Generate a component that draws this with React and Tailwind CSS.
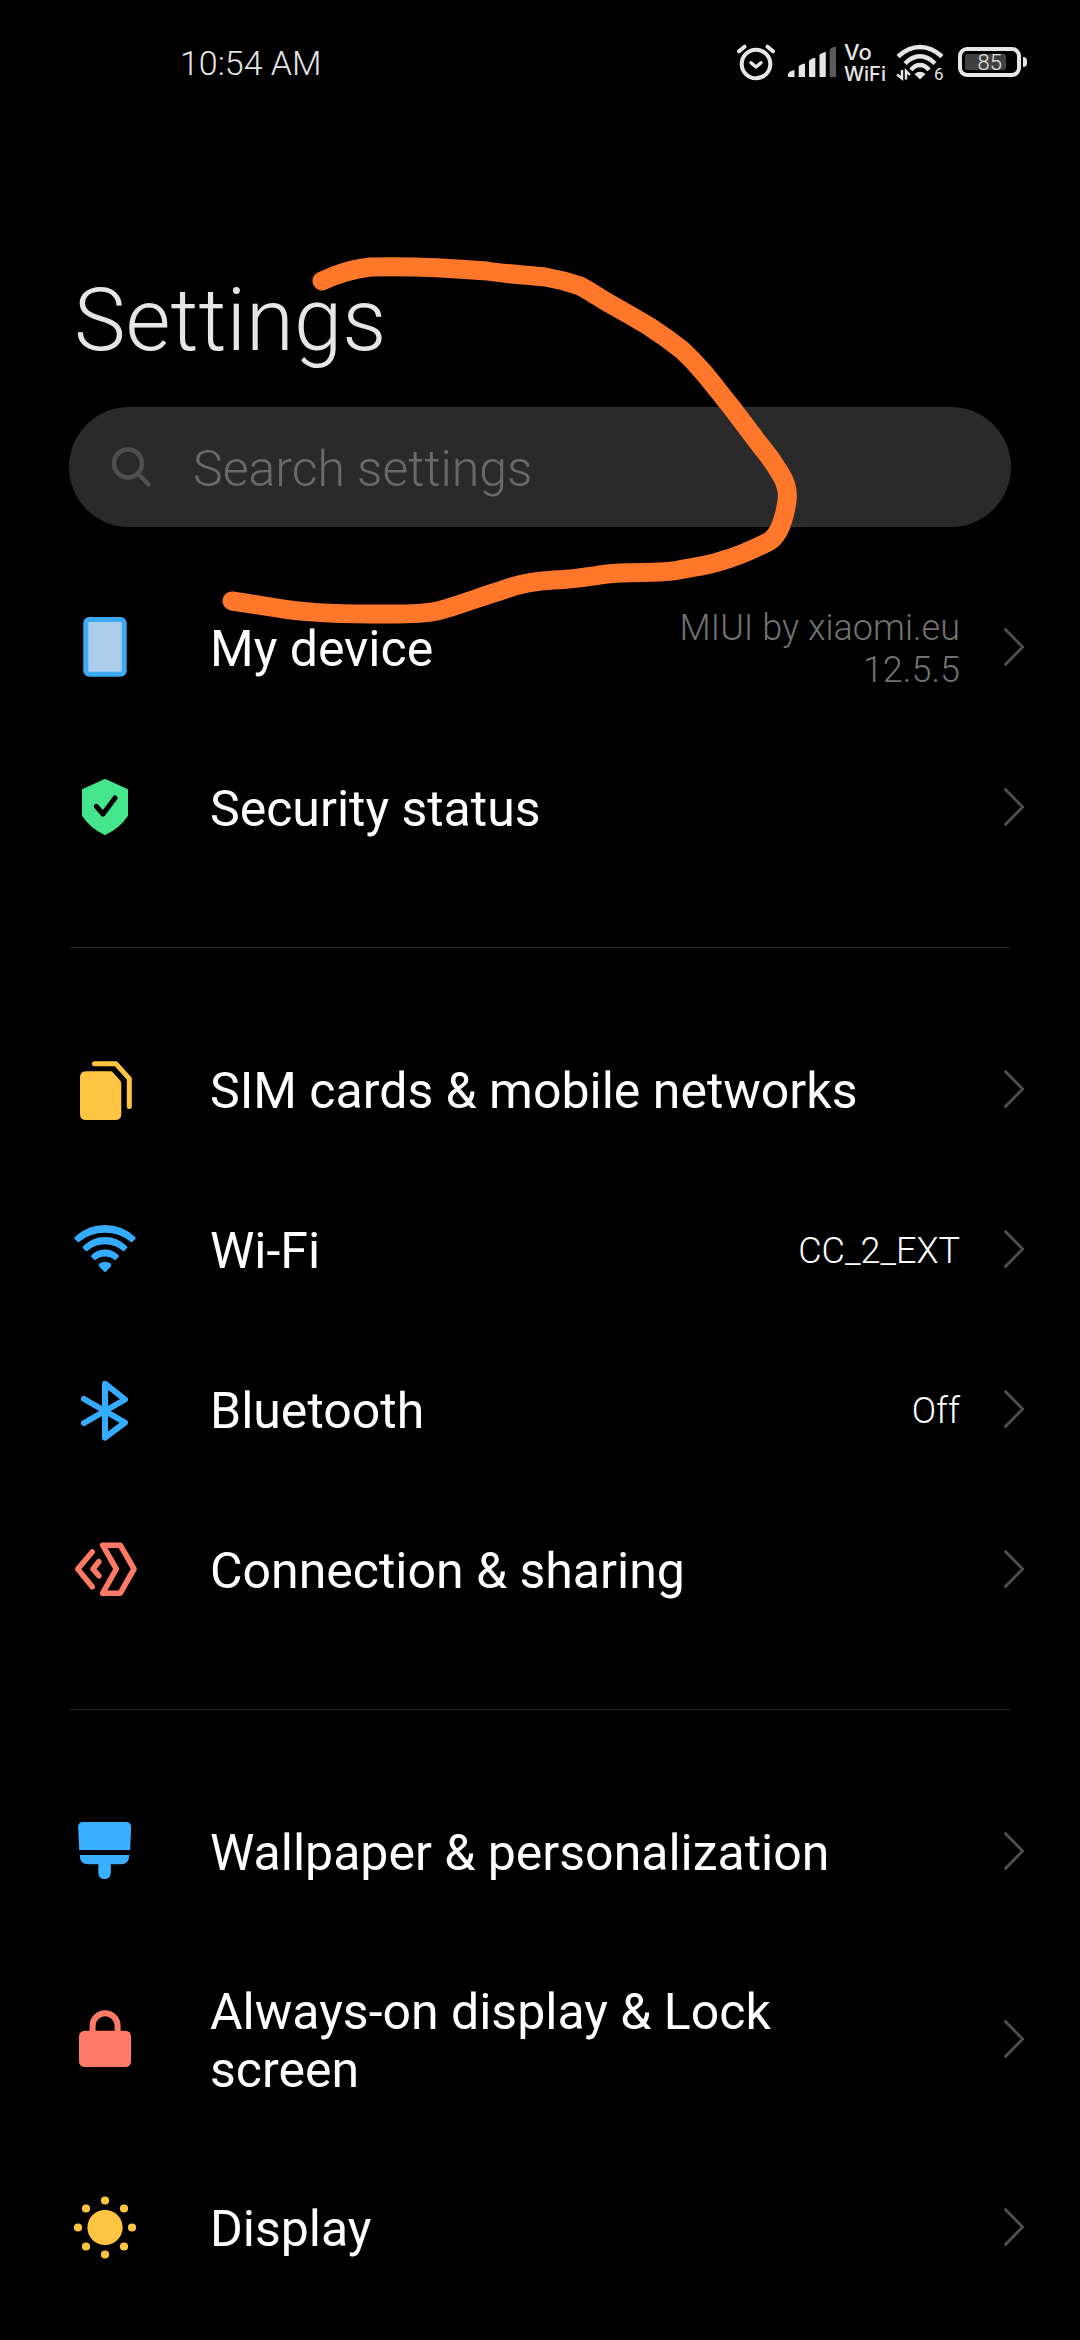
import React, { useState } from 'react';

const DeviceIcon = () => (
    <svg viewBox="0 0 72 72" className="w-[72px] h-[72px]">
        <rect x="16.8" y="8.5" width="38.4" height="54.7" rx="3.5" fill="#adcdec" stroke="#3eaaf2" strokeWidth="5" />
    </svg>
);

const ShieldIcon = () => (
    <svg viewBox="0 0 72 72" className="w-[72px] h-[72px]">
        <path d="M36 9L58 19V44.5C53 52 45 59 36 63C27 59 19 52 14 44.5V19Z" fill="#44e58c" stroke="#44e58c" strokeWidth="2" strokeLinejoin="round" />
        <path d="M27.3 35.3L34 43L46 27" fill="none" stroke="#000" strokeWidth="5" strokeLinecap="round" strokeLinejoin="round" />
    </svg>
);

const SimIcon = () => (
    <svg viewBox="0 0 72 72" className="w-[72px] h-[72px]">
        <path d="M17 18.3H41.5Q43 18.3 44 19.4L51.2 27.4Q52.3 28.6 52.3 30V61Q52.3 67 46.3 67H17Q11 67 11 61V24.3Q11 18.3 17 18.3Z" fill="#ffc542" />
        <path d="M25.5 10.8H47L60.3 25.7V53.5" fill="none" stroke="#ffc542" strokeWidth="5" strokeLinecap="round" strokeLinejoin="round" />
    </svg>
);

const WifiIcon = () => (
    <svg viewBox="0 0 72 72" className="w-[72px] h-[72px]">
        <g fill="#35acff" stroke="#35acff" strokeWidth="2" strokeLinejoin="round">
            <path d="M6.3 25A43 43 0 0 1 65.7 25L62.6 28.2A42 42 0 0 0 9.4 28.2Z" />
            <path d="M14.6 34.3A29.5 29.5 0 0 1 57.4 34.3L54.5 37.2A28 28 0 0 0 17.5 37.2Z" />
            <path d="M23 43.1A18 18 0 0 1 49 43.1L46.2 46.1A16 16 0 0 0 25.8 46.1Z" />
            <path d="M30.8 51.3Q36 48 41.2 51.3Q41.5 52.4 40.5 53.5L36 58L31.5 53.5Q30.5 52.4 30.8 51.3Z" />
        </g>
    </svg>
);

const BluetoothIcon = () => (
    <svg viewBox="0 0 72 72" className="w-[72px] h-[72px]">
        <path d="M15 26L56 49.5L36 64.7V10.7L56 26.5L15 50" fill="none" stroke="#35acff" strokeWidth="6" strokeLinecap="round" strokeLinejoin="round" />
    </svg>
);

const ConnectionIcon = () => (
    <svg viewBox="0 0 72 72" className="w-[72px] h-[72px]">
        <g fill="none" stroke="#ff7a66" strokeWidth="5.6" strokeLinecap="round" strokeLinejoin="round">
            <path d="M23.2 19L8.8 36L23.2 53.7" />
            <path d="M29.8 28.7L24 36L29.8 42.8" />
            <path d="M33.7 12.2H51.3L65 36L51.3 60.2H33.7L47.3 36Z" />
        </g>
    </svg>
);

const BrushIcon = () => (
    <svg viewBox="0 0 72 72" className="w-[72px] h-[72px]">
        <g fill="#3aaeff">
            <path d="M14 7H57Q62.2 7 62.1 12.5L61.2 35H10.2L9.1 12.5Q9 7 14 7Z" />
            <path d="M10.7 40H60.3Q60.3 49.3 52 49.3H41.8V58Q41.3 64 35.6 64Q29.8 64 29.3 58V49.3H19Q10.7 49.3 10.7 40Z" />
        </g>
    </svg>
);

const LockIcon = () => (
    <svg viewBox="0 0 72 72" className="w-[72px] h-[72px]">
        <rect x="10" y="27.7" width="52" height="36.3" rx="5.5" fill="#ff7a66" />
        <path d="M23.6 29V22.8A12.5 12.5 0 0 1 48.6 22.8V29" fill="none" stroke="#ff7a66" strokeWidth="6" />
    </svg>
);

const SunIcon = () => (
    <svg viewBox="0 0 72 72" className="w-[72px] h-[72px]" fill="#ffc542">
        <circle cx="36" cy="36.5" r="17.6" />
        {[[36, 9.5], [55, 17.5], [63, 36.5], [55, 55.5], [36, 63.5], [17, 55.5], [9, 36.5], [17, 17.5]].map(([x, y]) => (
            <circle key={`${x}-${y}`} cx={x} cy={y} r="4.1" />
        ))}
    </svg>
);

const Chevron = () => (
    <svg viewBox="0 0 24 40" className="w-6 h-10 shrink-0" fill="none" stroke="#505050" strokeWidth="2.8" strokeLinecap="round" strokeLinejoin="round">
        <path d="M3.5 2.5L20.7 20L3.5 37.5" />
    </svg>
);

const sections = [
    [
        { label: 'My device', icon: DeviceIcon, value: 'MIUI by xiaomi.eu 12.5.5', muted: true },
        { label: 'Security status', icon: ShieldIcon },
    ],
    [
        { label: 'SIM cards & mobile networks', icon: SimIcon },
        { label: 'Wi-Fi', icon: WifiIcon, value: 'CC_2_EXT' },
        { label: 'Bluetooth', icon: BluetoothIcon, value: 'Off' },
        { label: 'Connection & sharing', icon: ConnectionIcon },
    ],
    [
        { label: 'Wallpaper & personalization', icon: BrushIcon },
        { label: 'Always-on display & Lock screen', icon: LockIcon },
        { label: 'Display', icon: SunIcon },
    ],
];

function StatusBar() {
    return (
        <header className="flex items-center justify-between h-[124px] pl-[180px] pr-[53px] text-[#e6e6e6]">
            <span className="pt-[2px] text-[34px] leading-10 font-[350]">10:54 AM</span>
            <div className="flex items-center">
                {/* Alarm */}
                <svg viewBox="0 0 40 40" className="w-10 h-10 mr-3" fill="none" stroke="#e6e6e6" strokeWidth="4" strokeLinecap="round" strokeLinejoin="round">
                    <circle cx="20" cy="22" r="14.3" />
                    <path d="M3 9.3L8.5 4.7M37 9.3L31.5 4.7" />
                    <path d="M15 20.7L20 25L25 20.7" strokeWidth="3.4" />
                </svg>
                {/* Signal */}
                <svg viewBox="0 0 48 32" className="w-12 h-8 mr-2" fill="#e6e6e6">
                    <path d="M0 28Q1 25 6.5 24V31H0Z" />
                    <path d="M10.7 20.5Q12 18.5 17 17.6V31H10.7Z" />
                    <path d="M21 15Q22.5 12.7 27.3 11.8V31H21Z" />
                    <path d="M31.5 9Q33 6.8 37.8 6V31H31.5Z" />
                    <path d="M41.7 3.5Q43 1.3 48 0.5V31H41.7Z" fill="#5a5a5a" />
                </svg>
                <div className="flex flex-col w-[44px] mr-2 pt-[2px] leading-[22px] font-[Inter,sans-serif] font-medium">
                    <span className="text-[22px] leading-[22px]">Vo</span>
                    <span className="text-[20px] leading-[22px]">WiFi</span>
                </div>
                {/* Wi-Fi 6 */}
                <svg viewBox="0 0 48 36" className="w-12 h-9 mr-[14px] overflow-visible" fill="none" stroke="#e6e6e6" strokeWidth="4.4">
                    <path d="M2 12.5Q12.5 3 24 3Q35.5 3 46 12.5" />
                    <path d="M9 19.5Q16 12.3 24 12.3Q32 12.3 39 19.5" />
                    <path d="M15 26Q19 21 24 21Q29 21 33 26" />
                    <path d="M18.5 30Q24 25.5 29.5 30L24 35.5Z" fill="#e6e6e6" stroke="none" />
                    <path d="M6 26V34.5L1 30.5M10 35.5V27L14 31" strokeWidth="2.4" />
                    <text x="38" y="36" fill="#e6e6e6" stroke="none" fontSize="17" fontFamily="Roboto, sans-serif">6</text>
                </svg>
                {/* Battery */}
                <div className="flex items-center">
                    <div className="flex items-center w-[63px] h-[30px] rounded-[9px] border-4 border-[#e6e6e6] px-[3px]">
                        <div className="flex items-center justify-end w-[41px] h-4 rounded-[2px] bg-[#404040] pr-1">
                            <span className="pt-[2px] text-[22px] leading-6 font-[350]">85</span>
                        </div>
                    </div>
                    <div className="w-1 h-[10px] ml-[2px] rounded-r-sm bg-[#e6e6e6]" />
                </div>
            </div>
        </header>
    );
}

function SettingRow({ item }) {
    const Icon = item.icon;
    return (
        <li>
            <button type="button" className="flex items-center w-full min-h-[160px] py-12 pl-[69px] pr-[54px] text-left">
                <span className="shrink-0 -my-6 mr-[69px]">
                    <Icon />
                </span>
                <span className="max-w-[680px] pt-1 text-[50px] leading-[58px] font-normal text-white">{item.label}</span>
                {item.value && (
                    <span className={`ml-auto -my-6 pt-[3px] max-w-[300px] text-right text-[36px] leading-[42px] font-light ${item.muted ? 'text-[#727272]' : 'text-white'}`}>
                        {item.value}
                    </span>
                )}
                <span className={item.value ? 'ml-[42px]' : 'ml-auto'}>
                    <Chevron />
                </span>
            </button>
        </li>
    );
}

export default function App() {
    const [query, setQuery] = useState('');

    return (
        <div className="relative min-h-screen overflow-hidden bg-black font-[Roboto,sans-serif]">
            <StatusBar />

            <main>
                <h1 className="mt-[140px] px-[74px] text-[87px] leading-[112px] font-light text-[#e6e6e6]">Settings</h1>

                <label className="flex items-center h-[120px] mx-[69px] mt-[31px] pl-[40px] rounded-full bg-[#2a2a2a]">
                    <svg viewBox="0 0 44 44" className="w-11 h-11 shrink-0" fill="none" stroke="#505050" strokeWidth="4.5" strokeLinecap="round">
                        <circle cx="19" cy="18.5" r="14" />
                        <path d="M29 28.5L39.5 39.5" />
                    </svg>
                    <input
                        type="text"
                        aria-label="Search settings"
                        placeholder="Search settings"
                        value={query}
                        onChange={(e) => setQuery(e.target.value)}
                        className="flex-1 min-w-0 ml-10 pt-1 bg-transparent text-[50px] font-light text-white placeholder:text-[#6a6a6a] outline-none"
                    />
                </label>

                <div className="mt-10">
                    {sections.map((items, i) => (
                        <React.Fragment key={i}>
                            {i > 0 && <hr className="mx-[70px] mt-[60px] mb-[61px] border-[#262626]" />}
                            <ul>
                                {items.map((item) => (
                                    <SettingRow key={item.label} item={item} />
                                ))}
                            </ul>
                        </React.Fragment>
                    ))}
                </div>
            </main>

            {/* Marker stroke drawn over the page */}
            <svg width="1080" height="700" viewBox="0 0 1080 700" className="absolute top-0 left-0 pointer-events-none" fill="none" stroke="#ff772a" strokeWidth="19" strokeLinecap="round" strokeLinejoin="round">
                <path d="M322 281Q345 270 370 267C408 266 450 268 487 271C505 274 525 275 545 277Q563 280 580 286C590 291 601 299 612 305Q632 316 650 327Q667 338 682 350Q693 360 704 373C714 385 723 397 732 408L760 445Q771 458 780 473Q789 487 787 501C785 515 780 536 768 542C754 549 740 556 721 561C707 566 693 567 679 570C661 574 630 571 607 574C592 576 577 579 554 580C533 581 515 585 500 591C485 595 455 607 437 611C420 615 395 614 370 614C340 614 300 612 277 608L232 601" />
            </svg>
        </div>
    );
}
